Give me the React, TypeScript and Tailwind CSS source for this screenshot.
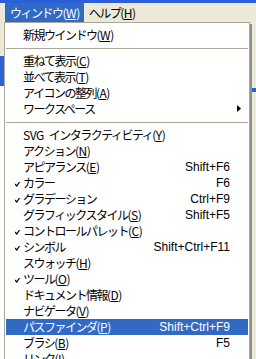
import React from "react";

type Item =
  | { sep: true }
  | {
      sep?: false;
      label: string;
      prefix?: string;
      key?: string;
      shortcut?: string;
      checked?: boolean;
      sub?: boolean;
      active?: boolean;
    };

const items: Item[] = [
  { label: "新規ウインドウ", key: "W" },
  { sep: true },
  { label: "重ねて表示", key: "C" },
  { label: "並べて表示", key: "T" },
  { label: "アイコンの整列", key: "A" },
  { label: "ワークスペース", sub: true },
  { sep: true },
  { prefix: "SVG", label: "インタラクティビティ", key: "Y" },
  { label: "アクション", key: "N" },
  { label: "アピアランス", key: "E", shortcut: "Shift+F6" },
  { label: "カラー", shortcut: "F6", checked: true },
  { label: "グラデーション", shortcut: "Ctrl+F9", checked: true },
  { label: "グラフィックスタイル", key: "S", shortcut: "Shift+F5" },
  { label: "コントロールパレット", key: "C", checked: true },
  { label: "シンボル", shortcut: "Shift+Ctrl+F11", checked: true },
  { label: "スウォッチ", key: "H" },
  { label: "ツール", key: "O", checked: true },
  { label: "ドキュメント情報", key: "D" },
  { label: "ナビゲータ", key: "V" },
  { label: "パスファインダ", key: "P", shortcut: "Shift+Ctrl+F9", active: true },
  { label: "ブラシ", key: "B", shortcut: "F5" },
  { label: "リンク", key: "I" },
];

function Mnemonic({ k }: { k: string }) {
  return (
    <span className="tracking-[-0.5px]">
      (<span className="underline underline-offset-1">{k}</span>)
    </span>
  );
}

export default function App() {
  return (
    <div
      className="relative w-[256px] h-[359px] overflow-hidden bg-[#ece9d8] text-[12px] leading-none text-black"
      style={{ fontFamily: '"Noto Sans CJK JP", "Liberation Sans", sans-serif' }}
    >
      {/* window behind */}
      <div className="h-[3px] bg-[#2a5fd8]" />
      <div className="flex h-[19px] items-stretch pl-[5px] tracking-[-1.5px]">
        <div className="flex items-center bg-[#316ac5] pl-[5px] pr-[4px] text-white">
          ウィンドウ<Mnemonic k="W" />
        </div>
        <div className="flex items-center px-[5px]">
          ヘルプ<Mnemonic k="H" />
        </div>
      </div>
      <div className="absolute left-0 top-[56px] h-[30px] w-[6px] bg-[#2c63d6]" />
      <div className="absolute left-0 top-[86px] bottom-0 w-[6px] bg-white border-r border-[#9c9c9c]" />
      <div className="absolute right-0 top-[88px] h-[4px] w-[8px] bg-[#2c63d6]" />

      {/* dropdown menu */}
      <div className="absolute left-[4px] top-[22px] w-[246px] border border-[#aca899] bg-white pt-[4px] shadow-[2px_2px_0_#8f8f8f] tracking-[-1.5px]">
        {items.map((it, i) =>
          it.sep ? (
            <div key={i} className="flex h-[10px] items-center px-[1px]">
              <div className="h-px w-full bg-[#aca899]" />
            </div>
          ) : (
            <div
              key={i}
              className={
                "relative flex h-[16px] items-center pl-[17px] pr-[18px] mx-[1px] " +
                (it.active ? "bg-[#316ac5] text-white" : "")
              }
            >
              {it.checked && (
                <svg className="absolute left-[9px] top-[7px]" width="5" height="5" viewBox="0 0 5 5">
                  <path d="M0 2 L1.8 4 L4.5 0" stroke="currentColor" strokeWidth="1.2" fill="none" />
                </svg>
              )}
              <span className="flex-1 whitespace-nowrap">
                {it.prefix && <span className="mr-[5px] tracking-[-0.5px]">{it.prefix}</span>}
                {it.label}
                {it.key && <Mnemonic k={it.key} />}
              </span>
              {it.shortcut && (
                <span
                  className="whitespace-nowrap tracking-normal text-[12px]"
                  style={{ fontFamily: '"Liberation Sans", sans-serif' }}
                >
                  {it.shortcut}
                </span>
              )}
              {it.sub && (
                <svg className="absolute right-[7px] top-[4px]" width="4" height="7" viewBox="0 0 4 7">
                  <path d="M0 0 L4 3.5 L0 7 Z" fill="black" />
                </svg>
              )}
            </div>
          )
        )}
      </div>
    </div>
  );
}
